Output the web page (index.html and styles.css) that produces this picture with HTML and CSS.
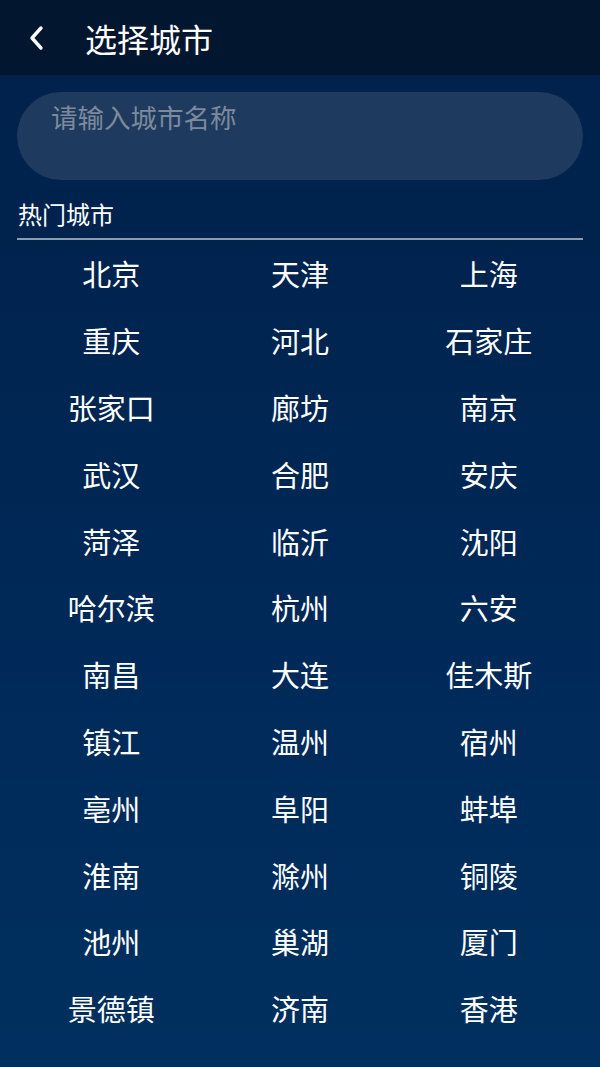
FILE: index.html
```html
<!DOCTYPE html>
<html lang="zh">
<head>
<meta charset="utf-8">
<link rel="stylesheet" href="styles.css">
</head>
<body>
<div class="page">
  <header class="topbar">
    <svg class="back" width="24" height="30" viewBox="0 0 24 30"><path d="M16 5 L7 15 L16 25" fill="none" stroke="#ffffff" stroke-width="3.4" stroke-linecap="round" stroke-linejoin="round"/></svg>
    <h1 class="title">选择城市</h1>
  </header>
  <main class="content">
    <div class="search"><span class="placeholder">请输入城市名称</span></div>
    <div class="section-title">热门城市</div>
    <div class="divider"></div>
    <div class="grid">
      <div class="city">北京</div><div class="city">天津</div><div class="city">上海</div>
      <div class="city">重庆</div><div class="city">河北</div><div class="city">石家庄</div>
      <div class="city">张家口</div><div class="city">廊坊</div><div class="city">南京</div>
      <div class="city">武汉</div><div class="city">合肥</div><div class="city">安庆</div>
      <div class="city">菏泽</div><div class="city">临沂</div><div class="city">沈阳</div>
      <div class="city">哈尔滨</div><div class="city">杭州</div><div class="city">六安</div>
      <div class="city">南昌</div><div class="city">大连</div><div class="city">佳木斯</div>
      <div class="city">镇江</div><div class="city">温州</div><div class="city">宿州</div>
      <div class="city">亳州</div><div class="city">阜阳</div><div class="city">蚌埠</div>
      <div class="city">淮南</div><div class="city">滁州</div><div class="city">铜陵</div>
      <div class="city">池州</div><div class="city">巢湖</div><div class="city">厦门</div>
      <div class="city">景德镇</div><div class="city">济南</div><div class="city">香港</div>
    </div>
  </main>
</div>
</body>
</html>
```
FILE: styles.css
```css
html, body {
  margin: 0;
  padding: 0;
}
body {
  font-family: "Noto Sans CJK SC", "Noto Sans", sans-serif;
  color: #ffffff;
  background: #002f62;
}
.page {
  width: 600px;
  height: 1067px;
  display: flex;
  flex-direction: column;
  background: linear-gradient(180deg, #00214a 0px, #00244f 300px, #002a5a 700px, #00305f 1067px);
}
.topbar {
  height: 75px;
  flex: none;
  display: flex;
  align-items: center;
  background: #021630;
  padding-left: 25px;
  box-sizing: border-box;
}
.back {
  display: block;
  margin-top: 1px;
}
.title {
  margin: 0 0 0 36px;
  font-size: 32px;
  font-weight: 400;
  line-height: 1;
  color: #ffffff;
}
.content {
  padding: 17px 17px 0;
  display: flex;
  flex-direction: column;
}
.search {
  height: 88px;
  border-radius: 44px;
  background: #1e3a5e;
  padding: 8px 0 0 34px;
  box-sizing: border-box;
}
.placeholder {
  font-size: 26.5px;
  line-height: 34px;
  color: #7d8a9c;
}
.section-title {
  margin-top: 19px;
  font-size: 24px;
  line-height: 30px;
  padding-left: 1px;
  color: #ffffff;
}
.divider {
  margin-top: 9px;
  height: 2px;
  background: #8b9bb0;
}
.grid {
  display: grid;
  grid-template-columns: repeat(3, 1fr);
  grid-auto-rows: 66.8px;
  margin-top: 0px;
}
.city {
  display: flex;
  align-items: center;
  justify-content: center;
  font-size: 29px;
  color: #ffffff;
}
```
